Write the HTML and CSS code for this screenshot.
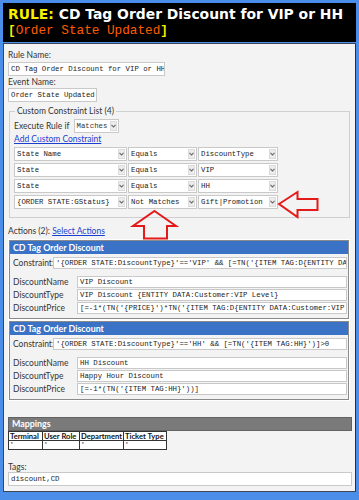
FILE: index.html
```html
<!DOCTYPE html>
<html lang="en">
<head>
    <meta charset="UTF-8">
    <meta name="viewport" content="width=device-width, initial-scale=1.0">
    <title>Rule Editor</title>
    <link rel="stylesheet" href="styles.css">
</head>
<body>
    <div class="page">
        <div class="title">
            <div class="title-main"><span class="rule">RULE:</span> CD Tag Order Discount for VIP or HH</div>
            <div class="title-event"><span class="bracket">[</span>Order State Updated<span class="bracket">]</span></div>
        </div>

        <div class="panel">
            <div class="lbl">Rule Name:</div>
            <div class="field name-field">CD Tag Order Discount for VIP or HH</div>
            <div class="lbl">Event Name:</div>
            <div class="field event-field">Order State Updated</div>

            <fieldset class="group">
                <legend>Custom Constraint List (4)</legend>
                <div class="exec-row">
                    <span>Execute Rule if</span>
                    <div class="select exec-select"><span class="val">Matches</span><span class="caret"><svg width="5" height="4" viewBox="0 0 5 4"><path d="M0.5 0.8 L2.5 3 L4.5 0.8" fill="none" stroke="#666" stroke-width="1.1"/></svg></span></div>
                </div>
                <a class="link add-link" href="#">Add Custom Constraint</a>
                <div class="rows">
                    <div class="select"><span class="val">State Name</span><span class="caret"><svg width="5" height="4" viewBox="0 0 5 4"><path d="M0.5 0.8 L2.5 3 L4.5 0.8" fill="none" stroke="#666" stroke-width="1.1"/></svg></span></div>
                    <div class="select"><span class="val">Equals</span><span class="caret"><svg width="5" height="4" viewBox="0 0 5 4"><path d="M0.5 0.8 L2.5 3 L4.5 0.8" fill="none" stroke="#666" stroke-width="1.1"/></svg></span></div>
                    <div class="select"><span class="val">DiscountType</span><span class="caret"><svg width="5" height="4" viewBox="0 0 5 4"><path d="M0.5 0.8 L2.5 3 L4.5 0.8" fill="none" stroke="#666" stroke-width="1.1"/></svg></span></div>

                    <div class="select"><span class="val">State</span><span class="caret"><svg width="5" height="4" viewBox="0 0 5 4"><path d="M0.5 0.8 L2.5 3 L4.5 0.8" fill="none" stroke="#666" stroke-width="1.1"/></svg></span></div>
                    <div class="select"><span class="val">Equals</span><span class="caret"><svg width="5" height="4" viewBox="0 0 5 4"><path d="M0.5 0.8 L2.5 3 L4.5 0.8" fill="none" stroke="#666" stroke-width="1.1"/></svg></span></div>
                    <div class="select"><span class="val">VIP</span><span class="caret"><svg width="5" height="4" viewBox="0 0 5 4"><path d="M0.5 0.8 L2.5 3 L4.5 0.8" fill="none" stroke="#666" stroke-width="1.1"/></svg></span></div>

                    <div class="select"><span class="val">State</span><span class="caret"><svg width="5" height="4" viewBox="0 0 5 4"><path d="M0.5 0.8 L2.5 3 L4.5 0.8" fill="none" stroke="#666" stroke-width="1.1"/></svg></span></div>
                    <div class="select"><span class="val">Equals</span><span class="caret"><svg width="5" height="4" viewBox="0 0 5 4"><path d="M0.5 0.8 L2.5 3 L4.5 0.8" fill="none" stroke="#666" stroke-width="1.1"/></svg></span></div>
                    <div class="select"><span class="val">HH</span><span class="caret"><svg width="5" height="4" viewBox="0 0 5 4"><path d="M0.5 0.8 L2.5 3 L4.5 0.8" fill="none" stroke="#666" stroke-width="1.1"/></svg></span></div>

                    <div class="select"><span class="val">{ORDER STATE:GStatus}</span><span class="caret"><svg width="5" height="4" viewBox="0 0 5 4"><path d="M0.5 0.8 L2.5 3 L4.5 0.8" fill="none" stroke="#666" stroke-width="1.1"/></svg></span></div>
                    <div class="select"><span class="val">Not Matches</span><span class="caret"><svg width="5" height="4" viewBox="0 0 5 4"><path d="M0.5 0.8 L2.5 3 L4.5 0.8" fill="none" stroke="#666" stroke-width="1.1"/></svg></span></div>
                    <div class="select"><span class="val">Gift|Promotion</span><span class="caret"><svg width="5" height="4" viewBox="0 0 5 4"><path d="M0.5 0.8 L2.5 3 L4.5 0.8" fill="none" stroke="#666" stroke-width="1.1"/></svg></span></div>
                </div>
            </fieldset>

            <div class="lbl actions-lbl">Actions (2): <a class="link" href="#">Select Actions</a></div>

            <div class="action">
                <div class="action-head">CD Tag Order Discount</div>
                <div class="constraint-row">
                    <span>Constraint:</span>
                    <div class="field">'{ORDER STATE:DiscountType}'=='VIP' &amp;&amp; [=TN('{ITEM TAG:D{ENTITY DA</div>
                </div>
                <div class="params">
                    <span>DiscountName</span>
                    <div class="field">VIP Discount</div>
                    <span>DiscountType</span>
                    <div class="field">VIP Discount {ENTITY DATA:Customer:VIP Level}</div>
                    <span>DiscountPrice</span>
                    <div class="field">[=-1*(TN('{PRICE}')*TN('{ITEM TAG:D{ENTITY DATA:Customer:VIP</div>
                </div>
            </div>

            <div class="action">
                <div class="action-head">CD Tag Order Discount</div>
                <div class="constraint-row">
                    <span>Constraint:</span>
                    <div class="field">'{ORDER STATE:DiscountType}'=='HH' &amp;&amp; [=TN('{ITEM TAG:HH}')]&gt;0</div>
                </div>
                <div class="params">
                    <span>DiscountName</span>
                    <div class="field">HH Discount</div>
                    <span>DiscountType</span>
                    <div class="field">Happy Hour Discount</div>
                    <span>DiscountPrice</span>
                    <div class="field">[=-1*(TN('{ITEM TAG:HH}'))]</div>
                </div>
            </div>

            <div class="mappings">
                <div class="map-head">Mappings</div>
                <table class="map-table">
                    <tr><th class="c1">Terminal</th><th class="c2">User Role</th><th class="c3">Department</th><th class="c4">Ticket Type</th></tr>
                    <tr><td>*</td><td>*</td><td>*</td><td>*</td></tr>
                </table>
            </div>

            <div class="lbl tags-lbl">Tags:</div>
            <div class="field tags-field">discount,CD</div>
        </div>

        <!-- red callout arrows drawn over the form -->
        <svg class="arrows" width="359" height="500" viewBox="0 0 359 500">
            <polygon points="154.5,211 176,226 167,226 167,238.5 144,238.5 144,226 133,226" fill="none" stroke="#e41a1a" stroke-width="2" stroke-linejoin="miter"/>
            <polygon points="279,204 297.5,192 297.5,199 317.5,199 317.5,210 297.5,210 297.5,217" fill="none" stroke="#e41a1a" stroke-width="2" stroke-linejoin="miter"/>
        </svg>
    </div>
</body>
</html>
```

FILE: styles.css
```css
html, body {
    margin: 0;
    background-color: #4a8ee9;
}

body {
    font-family: Lato, "Liberation Sans", sans-serif;
    font-size: 8.5px;
    color: #222;
}

.page {
    position: relative;
    width: 359px;
    height: 500px;
    padding: 3px 3px 0 3px;
    box-sizing: border-box;
}

/* title bar */
.title {
    background-color: #000;
    height: 39px;
    padding: 3px 0 0 5px;
    box-sizing: border-box;
    white-space: nowrap;
    overflow: hidden;
}

.title-main {
    font-family: "DejaVu Sans", Verdana, sans-serif;
    font-weight: bold;
    font-size: 13.9px;
    line-height: 17px;
    color: #fff;
}

.rule {
    color: #f8f000;
}

.title-event {
    font-family: "Liberation Mono", monospace;
    font-size: 12.7px;
    line-height: 15px;
    color: #ff5c00;
}

.bracket {
    color: #f8f000;
    font-weight: bold;
}

/* main panel */
.panel {
    margin-top: 1px;
    height: 449px;
    background-color: #f3f3f3;
    border: 1px solid #3d4656;
    border-right-color: #2a3040;
    padding: 5px 2px 0 4px;
    box-sizing: border-box;
}

.lbl {
    line-height: 12px;
    color: #333;
}

.field {
    background-color: #fff;
    border: 1px solid #c9c9c9;
    height: 14px;
    box-sizing: border-box;
    padding: 0 2px;
    font-family: "Liberation Mono", monospace;
    font-size: 7.35px;
    line-height: 12px;
    color: #222;
    white-space: nowrap;
    overflow: hidden;
}

.name-field {
    width: 157px;
    margin-top: 1px;
}

.event-field {
    width: 89px;
}

.panel > .lbl:nth-of-type(2) {
    line-height: 11px;
}

/* constraint group */
.group {
    margin: 4px 0 0 1px;
    width: 341px;
    padding: 0 3px 8px 4px;
    border: 1px solid #cfcfcf;
    box-sizing: border-box;
}

.group legend {
    padding: 0 2px;
    margin-left: 1px;
    line-height: 11px;
    color: #333;
}

.exec-row {
    display: flex;
    align-items: center;
    gap: 4px;
    margin-top: 2px;
    color: #333;
}

.select {
    display: flex;
    height: 14px;
    background-color: #fff;
    border: 1px solid #c9c9c9;
    box-sizing: border-box;
    font-family: "Liberation Mono", monospace;
    font-size: 7.35px;
    line-height: 12px;
    overflow: hidden;
}

.select .val {
    flex: 1;
    padding: 0 2px;
    white-space: nowrap;
    overflow: hidden;
}

.select .caret {
    width: 7px;
    margin: 1px;
    background-color: #ececec;
    border: 1px solid #dcdcdc;
    box-sizing: border-box;
    display: flex;
    align-items: center;
    justify-content: center;
}

.exec-select {
    width: 45px;
}

.link {
    color: #1a3fd0;
    text-decoration: underline;
}

.add-link {
    display: block;
    line-height: 13px;
    margin: 0 0 1px 0;
}

.rows {
    display: grid;
    grid-template-columns: 113px 69px 80px;
    column-gap: 1px;
    row-gap: 2px;
}

/* actions */
.actions-lbl {
    margin-top: 7px;
}

.action {
    width: 340px;
    margin: 3px 0 0 1px;
    border: 1px solid #8a8a8a;
    box-shadow: 0 0 0 1px #fff;
    box-sizing: border-box;
    padding-bottom: 4px;
}

.action + .action {
    margin-top: 2px;
}

.action-head {
    background-color: #3a72c6;
    color: #fff;
    font-weight: bold;
    font-size: 8.9px;
    line-height: 13px;
    height: 13px;
    padding-left: 3px;
}

.constraint-row {
    display: grid;
    grid-template-columns: 40px 1fr;
    align-items: center;
    margin: 3px 1px 0 3px;
    color: #333;
}

.params {
    display: grid;
    grid-template-columns: 64px 1fr;
    row-gap: 1px;
    align-items: center;
    margin: 7px 1px 0 3px;
    color: #333;
}

.params .field,
.constraint-row .field {
    height: 12px;
    line-height: 10px;
}

.action:last-of-type .action-head {
    height: 14px;
    line-height: 14px;
}

/* mappings */
.mappings {
    margin-top: 17px;
}

.map-head {
    background-color: #7a7a7a;
    border: 1px solid #626262;
    color: #fff;
    font-weight: bold;
    font-size: 8.9px;
    line-height: 12px;
    height: 14px;
    box-sizing: border-box;
    padding-left: 3px;
    width: 344px;
}

.map-table {
    border-collapse: collapse;
    table-layout: fixed;
    width: 154px;
    font-size: 7.6px;
    background-color: #fff;
}

.map-table th,
.map-table td {
    border: 1px solid #333;
    padding: 0 1px;
    text-align: left;
    white-space: nowrap;
    overflow: hidden;
    line-height: 8px;
}

.map-table th {
    font-weight: bold;
    color: #111;
}

.map-table td {
    font-family: "Liberation Mono", monospace;
    font-size: 6px;
    color: #444;
}

.c1 { width: 31px; }
.c2 { width: 34px; }
.c3 { width: 41px; }
.c4 { width: 40px; }

.tags-lbl {
    margin-top: 12px;
    line-height: 10px;
}

.tags-field {
    width: 344px;
}

.arrows {
    position: absolute;
    top: 0;
    left: 0;
    pointer-events: none;
}
```
